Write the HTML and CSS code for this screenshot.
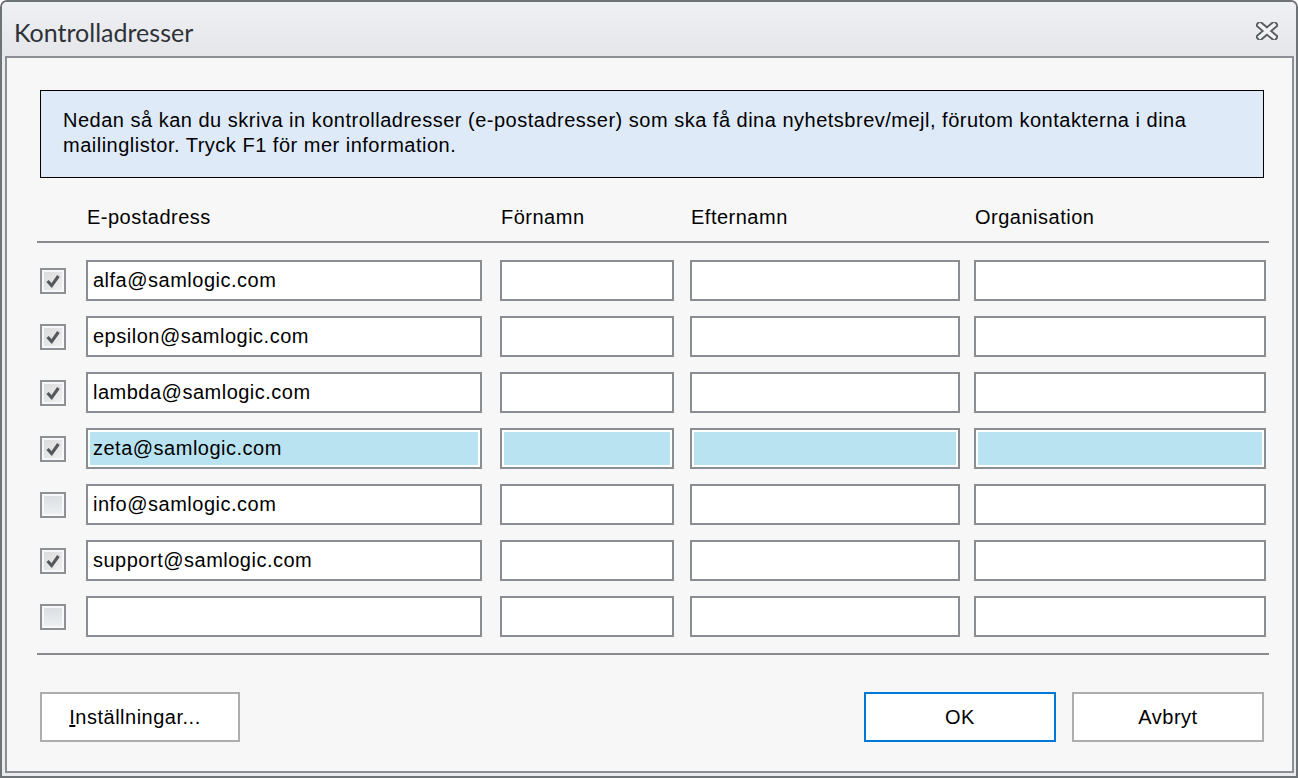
FILE: index.html
```html
<!DOCTYPE html>
<html lang="sv">
<head>
<meta charset="utf-8">
<title>Kontrolladresser</title>
<link rel="stylesheet" href="styles.css">
</head>
<body>
<div class="window">
  <div class="titlebar">
    <span class="title">Kontrolladresser</span>
    <svg class="close" width="22" height="18" viewBox="0 0 22 18">
      <path d="M4 3 L18 15 M18 3 L4 15" stroke="#595d63" stroke-width="7.5" stroke-linecap="square" fill="none"/>
      <path d="M4 3 L18 15 M18 3 L4 15" stroke="#f2f3f5" stroke-width="3.6" stroke-linecap="square" fill="none"/>
    </svg>
  </div>
  <div class="client">
    <div class="info">Nedan så kan du skriva in kontrolladresser (e-postadresser) som ska få dina nyhetsbrev/mejl, förutom kontakterna i dina mailinglistor. Tryck F1 för mer information.</div>

    <div class="grid header">
      <span class="c-email">E-postadress</span>
      <span class="c-fn">Förnamn</span>
      <span class="c-en">Efternamn</span>
      <span class="c-org">Organisation</span>
    </div>
    <div class="rule"></div>

    <div class="rows">
      <div class="grid row">
        <span class="c-chk chk checked"><svg viewBox="0 0 22 22"><path d="M5 11 L9.5 16 L17 5.5" /></svg></span>
        <input class="c-email field" type="text" value="alfa@samlogic.com">
        <input class="c-fn field" type="text" value="">
        <input class="c-en field" type="text" value="">
        <input class="c-org field" type="text" value="">
      </div>
      <div class="grid row">
        <span class="c-chk chk checked"><svg viewBox="0 0 22 22"><path d="M5 11 L9.5 16 L17 5.5" /></svg></span>
        <input class="c-email field" type="text" value="epsilon@samlogic.com">
        <input class="c-fn field" type="text" value="">
        <input class="c-en field" type="text" value="">
        <input class="c-org field" type="text" value="">
      </div>
      <div class="grid row">
        <span class="c-chk chk checked"><svg viewBox="0 0 22 22"><path d="M5 11 L9.5 16 L17 5.5" /></svg></span>
        <input class="c-email field" type="text" value="lambda@samlogic.com">
        <input class="c-fn field" type="text" value="">
        <input class="c-en field" type="text" value="">
        <input class="c-org field" type="text" value="">
      </div>
      <div class="grid row selected">
        <span class="c-chk chk checked"><svg viewBox="0 0 22 22"><path d="M5 11 L9.5 16 L17 5.5" /></svg></span>
        <input class="c-email field" type="text" value="zeta@samlogic.com">
        <input class="c-fn field" type="text" value="">
        <input class="c-en field" type="text" value="">
        <input class="c-org field" type="text" value="">
      </div>
      <div class="grid row">
        <span class="c-chk chk"></span>
        <input class="c-email field" type="text" value="info@samlogic.com">
        <input class="c-fn field" type="text" value="">
        <input class="c-en field" type="text" value="">
        <input class="c-org field" type="text" value="">
      </div>
      <div class="grid row">
        <span class="c-chk chk checked"><svg viewBox="0 0 22 22"><path d="M5 11 L9.5 16 L17 5.5" /></svg></span>
        <input class="c-email field" type="text" value="support@samlogic.com">
        <input class="c-fn field" type="text" value="">
        <input class="c-en field" type="text" value="">
        <input class="c-org field" type="text" value="">
      </div>
      <div class="grid row">
        <span class="c-chk chk"></span>
        <input class="c-email field" type="text" value="">
        <input class="c-fn field" type="text" value="">
        <input class="c-en field" type="text" value="">
        <input class="c-org field" type="text" value="">
      </div>
    </div>

    <div class="rule rule-bottom"></div>

    <div class="buttons">
      <button class="btn btn-settings" type="button"><u>I</u>nställningar...</button>
      <button class="btn btn-ok" type="button">OK</button>
      <button class="btn btn-cancel" type="button">Avbryt</button>
    </div>
  </div>
</div>
</body>
</html>
```

FILE: styles.css
```css
html, body {
  margin: 0;
  padding: 0;
  background: #ffffff;
}

body {
  font-family: "Liberation Sans", Arial, sans-serif;
  font-size: 20px;
  letter-spacing: 0.5px;
  color: #000;
}

.window {
  width: 1298px;
  height: 778px;
  box-sizing: border-box;
  border: 2px solid #6e7378;
  border-radius: 7px 7px 0 0;
  background: #e9ebee;
  display: flex;
  flex-direction: column;
}

.titlebar {
  height: 54px;
  flex: none;
  display: flex;
  align-items: center;
  justify-content: space-between;
  padding: 0 18px 0 12px;
  background: linear-gradient(#eef0f3, #e4e6ea);
  border-radius: 5px 5px 0 0;
}

.title {
  font-family: Lato, "Noto Sans", sans-serif;
  font-size: 25px;
  letter-spacing: 0;
  color: #2e3237;
  margin-top: 6px;
}

.close {
  display: block;
  margin-top: 4px;
}

.client {
  flex: 1;
  margin: 0 2px 3px 3px;
  border: 2px solid #8b8f94;
  background: #f7f7f7;
  padding: 32px 23px 0 30px;
}

.info {
  margin: 0 5px 0 3px;
  border: 1px solid #000;
  background: #deeaf8;
  padding: 17px 22px 19px;
  line-height: 25px;
}

.grid {
  display: grid;
  grid-template-columns: 3px 26px 20px 396px 18px 174px 16px 270px 14px 292px;
  align-items: center;
}

.c-chk { grid-column: 2; }
.c-email { grid-column: 4; }
.c-fn { grid-column: 6; }
.c-en { grid-column: 8; }
.c-org { grid-column: 10; }

.header {
  margin-top: 27px;
  line-height: 25px;
}

.header span {
  padding-left: 1px;
}

.rule {
  height: 2px;
  background: #8a8c8f;
  margin-top: 11px;
}

.rows {
  margin-top: 17px;
  display: flex;
  flex-direction: column;
  gap: 15px;
}

.row {
  height: 41px;
}

.field {
  box-sizing: border-box;
  width: 100%;
  height: 41px;
  margin: 0;
  border: 2px solid #8a8e93;
  border-radius: 0;
  background: #ffffff;
  padding: 0 5px;
  font-family: "Liberation Sans", Arial, sans-serif;
  font-size: 20px;
  letter-spacing: 0.5px;
  color: #000;
  outline: none;
}

.selected .field {
  background: #b9e3f0;
  box-shadow: inset 0 0 0 2px #ffffff;
}

.chk {
  box-sizing: border-box;
  width: 26px;
  height: 26px;
  border: 2px solid #8f9195;
  background: linear-gradient(#d8dce1, #eff1f3);
  box-shadow: inset 0 0 0 2px #f7f8f9;
  display: flex;
  align-items: center;
  justify-content: center;
}

.chk.checked {
  background: linear-gradient(135deg, #d9d9d9, #f1f1f1);
}

.chk svg {
  width: 20px;
  height: 20px;
  display: block;
}

.chk svg path {
  fill: none;
  stroke: #55575a;
  stroke-width: 3.4;
  stroke-linejoin: miter;
}

.rule-bottom {
  margin-top: 16px;
}

.buttons {
  display: flex;
  gap: 16px;
  margin-top: 37px;
  padding: 0 5px 0 3px;
}

.btn {
  box-sizing: border-box;
  height: 50px;
  border: 2px solid #adadad;
  background: #ffffff;
  font-family: "Liberation Sans", Arial, sans-serif;
  font-size: 20px;
  letter-spacing: 0.5px;
  color: #000;
  padding: 0;
  border-radius: 0;
}

.btn-settings {
  width: 200px;
  margin-right: auto;
  padding-right: 10px;
}

.btn-ok {
  width: 192px;
  border-color: #0078d7;
}

.btn-cancel {
  width: 192px;
}
```
